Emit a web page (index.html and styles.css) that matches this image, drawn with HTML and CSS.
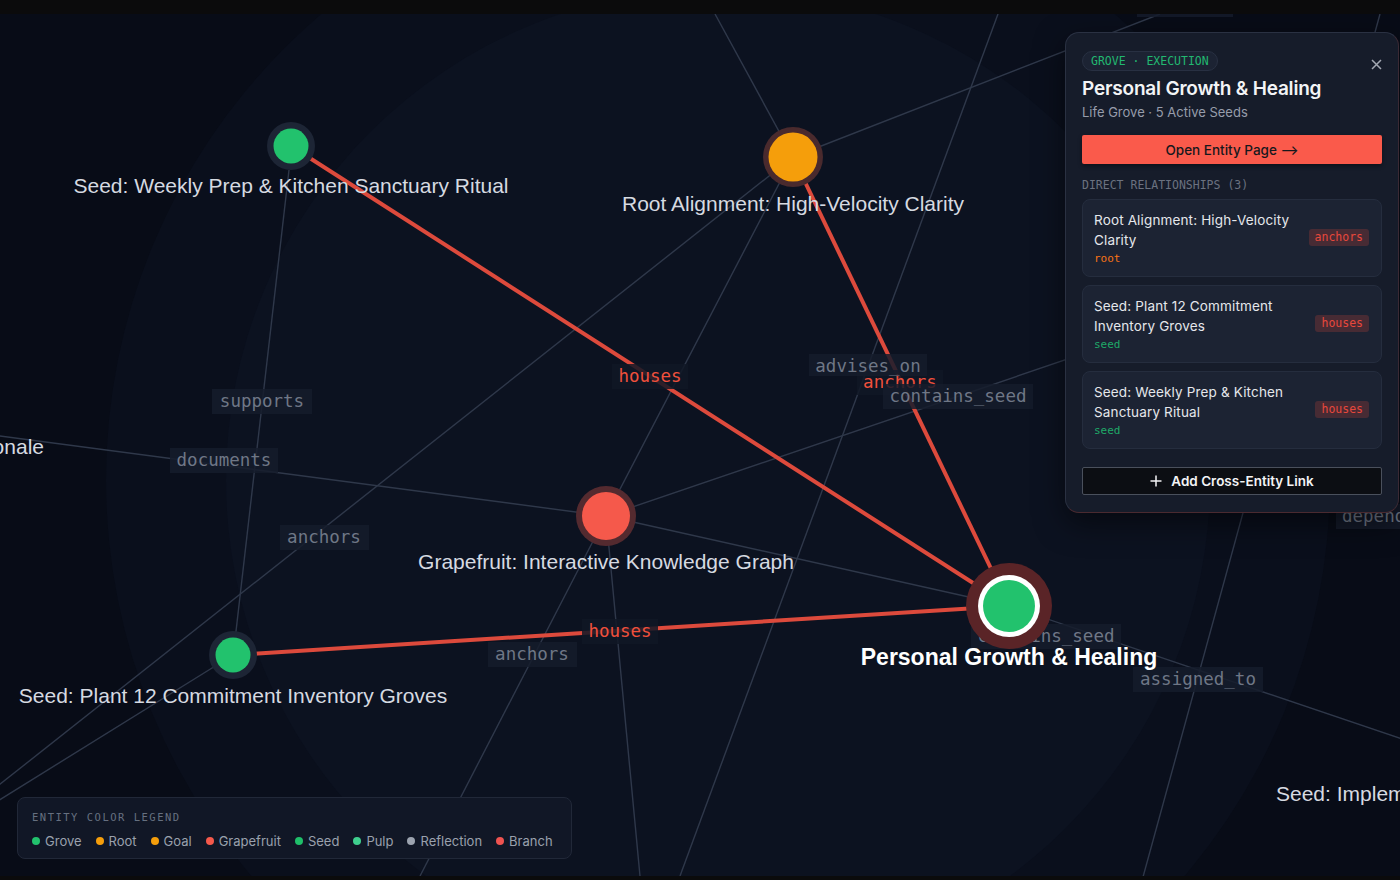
FILE: index.html
```html
<!DOCTYPE html>
<html>
	<head>
		<meta charset="UTF-8"/>
		<title>Grove Graph</title>
		<link rel="stylesheet" href="styles.css">
	</head>
	<body>
		<div class="topbar"></div>
		<main class="canvas">
			<svg class="graph" viewBox="0 14 1400 862" width="1400" height="862">
				<!-- backdrop -->
				<rect x="0" y="14" width="1400" height="862" fill="#080c17"/>
				<circle cx="718" cy="480" r="612" fill="#0a0f1c"/>
				<circle cx="718" cy="480" r="492" fill="#0c1220"/>

				<!-- faint edges -->
				<g class="edge">
					<line x1="289" y1="170" x2="235" y2="640"/>
					<line x1="-60" y1="428" x2="606" y2="516"/>
					<line x1="606" y1="516" x2="1009" y2="606"/>
					<line x1="793" y1="157" x2="-20" y2="800"/>
					<line x1="233" y1="655" x2="-20" y2="812"/>
					<line x1="793" y1="157" x2="606" y2="516"/>
					<line x1="793" y1="157" x2="715" y2="14"/>
					<line x1="793" y1="157" x2="1160" y2="14"/>
					<line x1="606" y1="516" x2="1300" y2="280"/>
					<line x1="998" y1="14" x2="680" y2="876"/>
					<line x1="606" y1="516" x2="640" y2="876"/>
					<line x1="606" y1="516" x2="420" y2="876"/>
					<line x1="1009" y1="606" x2="1420" y2="745"/>
					<line x1="1380" y1="14" x2="1143" y2="877"/>
				</g>

				<!-- highlighted edges -->
				<g class="edge-hot">
					<line x1="291" y1="146" x2="1009" y2="606"/>
					<line x1="793" y1="157" x2="1009" y2="606"/>
					<line x1="233" y1="655" x2="1009" y2="606"/>
				</g>

				<!-- edge labels -->
				<g class="elabel">
					<rect x="1137" y="0" width="96" height="17"/>
					<rect x="212" y="389" width="100" height="25"/>
					<text x="262" y="407">supports</text>
					<rect x="170" y="448" width="108" height="25"/>
					<text x="224" y="466">documents</text>
					<rect x="280" y="525" width="89" height="25"/>
					<text x="324" y="543">anchors</text>
					<rect x="488" y="642" width="89" height="25"/>
					<text x="532" y="660">anchors</text>
					<rect class="hot" x="857" y="370" width="86" height="25"/>
					<text class="hot" x="900" y="388">anchors</text>
					<rect x="809" y="354" width="118" height="22"/>
					<text x="868" y="372">advises_on</text>
					<rect x="883" y="384" width="150" height="25"/>
					<text x="958" y="402">contains_seed</text>
					<rect x="971" y="624" width="150" height="25"/>
					<text x="1046" y="642">contains_seed</text>
					<rect x="1133" y="667" width="130" height="25"/>
					<text x="1198" y="685">assigned_to</text>
					<rect x="1336" y="504" width="90" height="25"/>
					<text class="start" x="1342" y="522">dependency</text>
					<rect class="hot" x="612" y="364" width="76" height="25"/>
					<text class="hot" x="650" y="382">houses</text>
					<rect class="hot" x="582" y="619" width="76" height="25"/>
					<text class="hot" x="620" y="637">houses</text>
				</g>

				<!-- nodes -->
				<g class="node">
					<circle cx="291" cy="146" r="24" fill="#1d2535"/>
					<circle cx="291" cy="146" r="17.5" fill="#22c26d"/>
					<circle cx="793" cy="157" r="30" fill="#4a2a2d"/>
					<circle cx="793" cy="157" r="24.5" fill="#f59e0b"/>
					<circle cx="606" cy="516" r="30" fill="#542a2f"/>
					<circle cx="606" cy="516" r="24" fill="#f5594b"/>
					<circle cx="233" cy="655" r="24" fill="#1d2535"/>
					<circle cx="233" cy="655" r="17.5" fill="#22c26d"/>
					<circle cx="1009" cy="606" r="43" fill="#5a2427"/>
					<circle cx="1009" cy="606" r="31" fill="#ffffff"/>
					<circle cx="1009" cy="606" r="26" fill="#22c26d"/>
				</g>

				<!-- node labels -->
				<g class="nlabel">
					<text x="291" y="193">Seed: Weekly Prep &amp; Kitchen Sanctuary Ritual</text>
					<text x="793" y="211">Root Alignment: High-Velocity Clarity</text>
					<text x="606" y="569">Grapefruit: Interactive Knowledge Graph</text>
					<text x="233" y="703">Seed: Plant 12 Commitment Inventory Groves</text>
					<text class="end" x="44" y="454">Seed: Process Rationale</text>
					<text class="start" x="1276" y="801">Seed: Implement Weekly Review</text>
					<text class="main" x="1009" y="665">Personal Growth &amp; Healing</text>
				</g>
			</svg>

			<aside class="panel">
				<div class="panel-head">
					<span class="chip">GROVE · EXECUTION</span>
					<button class="close" aria-label="close">
						<svg width="11" height="11" viewBox="0 0 11 11"><path d="M1 1 L10 10 M10 1 L1 10"/></svg>
					</button>
				</div>
				<h2 class="panel-title">Personal Growth &amp; Healing</h2>
				<p class="panel-sub">Life Grove · 5 Active Seeds</p>
				<button class="btn-open">Open Entity Page ⟶</button>
				<div class="section-label">DIRECT RELATIONSHIPS (3)</div>
				<ul class="rels">
					<li class="rel">
						<div class="rel-text">
							<div class="rel-name">Root Alignment: High-Velocity Clarity</div>
							<div class="rel-type root">root</div>
						</div>
						<span class="rel-badge">anchors</span>
					</li>
					<li class="rel">
						<div class="rel-text">
							<div class="rel-name">Seed: Plant 12 Commitment Inventory Groves</div>
							<div class="rel-type seed">seed</div>
						</div>
						<span class="rel-badge">houses</span>
					</li>
					<li class="rel">
						<div class="rel-text">
							<div class="rel-name">Seed: Weekly Prep &amp; Kitchen Sanctuary Ritual</div>
							<div class="rel-type seed">seed</div>
						</div>
						<span class="rel-badge">houses</span>
					</li>
				</ul>
				<button class="btn-add">
					<svg width="12" height="12" viewBox="0 0 12 12"><path d="M6 0.5 V11.5 M0.5 6 H11.5"/></svg>
					Add Cross-Entity Link
				</button>
			</aside>

			<div class="legend">
				<div class="legend-title">ENTITY COLOR LEGEND</div>
				<div class="legend-items">
					<span class="li"><i style="background:#22c26d"></i>Grove</span>
					<span class="li"><i style="background:#f59e0b"></i>Root</span>
					<span class="li"><i style="background:#f59e0b"></i>Goal</span>
					<span class="li"><i style="background:#f5594b"></i>Grapefruit</span>
					<span class="li"><i style="background:#1fbf6a"></i>Seed</span>
					<span class="li"><i style="background:#3fcf8e"></i>Pulp</span>
					<span class="li"><i style="background:#9ca3af"></i>Reflection</span>
					<span class="li"><i style="background:#ef5350"></i>Branch</span>
				</div>
			</div>
		</main>
		<div class="bottombar"></div>
	</body>
</html>
```
FILE: styles.css
```css
html, body{
	margin: 0;
	padding: 0;
	background: #0b0b0c;
	width: 1400px;
	height: 880px;
	overflow: hidden;
	font-family: "Inter", "Noto Sans", sans-serif;
}
.topbar{
	height: 14px;
	background: #0b0b0c;
}
.bottombar{
	height: 4px;
	background: #0b0b0c;
}
.canvas{
	position: relative;
	width: 1400px;
	height: 862px;
	overflow: hidden;
}
.graph{
	display: block;
}

/* graph */
.edge line{
	stroke: #2f384a;
	stroke-width: 1.4;
}
.edge-hot line{
	stroke: #dd4a3c;
	stroke-width: 4;
}
.elabel rect{
	fill: #151c2b;
	opacity: 0.85;
}
.elabel rect.hot{
	fill: #111726;
}
.elabel text{
	font-family: "DejaVu Sans Mono", "Liberation Mono", monospace;
	font-size: 17.5px;
	fill: #6f7786;
	text-anchor: middle;
}
.elabel text.hot{
	fill: #f0503c;
}
.nlabel text{
	font-family: "Liberation Sans", Arial, sans-serif;
	font-size: 21px;
	fill: #d6dae1;
	text-anchor: middle;
}
.nlabel text.main{
	font-weight: bold;
	font-size: 23px;
	fill: #ffffff;
}
.graph text.start{
	text-anchor: start;
}
.graph text.end{
	text-anchor: end;
}

/* side panel */
.panel{
	position: absolute;
	left: 1065px;
	top: 18px;
	width: 334px;
	box-sizing: border-box;
	padding: 18px 16px 17px;
	background: #161c2a;
	border: 1px solid #2a3142;
	border-bottom-color: #4a2a30;
	border-right-color: #3a2a34;
	border-radius: 14px;
	box-shadow: 0 10px 30px rgba(0,0,0,0.5);
	color: #e8eaee;
}
.panel-head{
	display: flex;
	align-items: flex-start;
	justify-content: space-between;
	height: 20px;
}
.chip{
	display: inline-block;
	height: 20px;
	line-height: 18px;
	padding: 0 8px;
	border-radius: 10px;
	background: #1c2333;
	border: 1px solid #283042;
	box-sizing: border-box;
	font-family: "DejaVu Sans Mono", "Liberation Mono", monospace;
	font-size: 11.5px;
	color: #22b871;
}
.close{
	background: none;
	border: 0;
	padding: 0;
	margin: 6px -1px 0 0;
	width: 14px;
	height: 14px;
	display: flex;
	align-items: center;
	justify-content: center;
}
.close path{
	stroke: #a3a8b2;
	stroke-width: 1.5;
	fill: none;
}
.panel-title{
	margin: 5px 0 0;
	font-size: 19px;
	line-height: 26px;
	font-weight: 600;
	color: #f3f4f6;
	letter-spacing: -0.2px;
}
.panel-sub{
	margin: 1px 0 0;
	font-size: 13px;
	line-height: 18px;
	color: #969cab;
}
.btn-open{
	display: block;
	width: 100%;
	margin-top: 14px;
	height: 29px;
	border: 0;
	border-radius: 2px;
	background: #fa5a4b;
	color: #16181d;
	font-family: "Inter", "DejaVu Sans", sans-serif;
	font-size: 13.5px;
	font-weight: 500;
	box-shadow: 0 2px 4px rgba(0,0,0,0.4);
}
.section-label{
	margin-top: 14px;
	font-family: "DejaVu Sans Mono", "Liberation Mono", monospace;
	font-size: 11.5px;
	line-height: 14px;
	color: #6b7280;
}
.rels{
	list-style: none;
	margin: 7px 0 0;
	padding: 0;
	display: flex;
	flex-direction: column;
	gap: 8px;
}
.rel{
	display: flex;
	align-items: center;
	gap: 10px;
	height: 78px;
	box-sizing: border-box;
	padding: 9px 12px 10px 11px;
	background: #1c2333;
	border: 1px solid #252d3e;
	border-radius: 8px;
}
.rel-text{
	flex: 1;
	min-width: 0;
}
.rel-name{
	font-size: 13.5px;
	letter-spacing: 0.15px;
	line-height: 20px;
	color: #e5e7eb;
	max-width: 208px;
}
.rel-type{
	margin-top: 1px;
	font-family: "DejaVu Sans Mono", "Liberation Mono", monospace;
	font-size: 11px;
	line-height: 15px;
}
.rel-type.root{
	color: #f97316;
}
.rel-type.seed{
	color: #1fa968;
}
.rel-badge{
	flex: none;
	padding: 0 6px;
	border-radius: 3px;
	background: rgba(226,72,60,0.22);
	font-family: "DejaVu Sans Mono", "Liberation Mono", monospace;
	font-size: 11.5px;
	line-height: 17px;
	color: #e8483c;
}
.btn-add{
	display: flex;
	align-items: center;
	justify-content: center;
	gap: 9px;
	width: 100%;
	height: 28px;
	margin-top: 18px;
	background: #0c0e13;
	border: 1.5px solid #4a505c;
	border-radius: 2px;
	color: #f3f4f6;
	font-family: "Inter", sans-serif;
	font-size: 13.5px;
	font-weight: 600;
}
.btn-add path{
	stroke: #f3f4f6;
	stroke-width: 1.5;
	fill: none;
}

/* legend */
.legend{
	position: absolute;
	left: 17px;
	top: 783px;
	width: 555px;
	height: 62px;
	box-sizing: border-box;
	padding: 12px 14px 0 14px;
	background: #111726;
	border: 1px solid #212838;
	border-radius: 8px;
}
.legend-title{
	font-family: "DejaVu Sans Mono", "Liberation Mono", monospace;
	font-size: 10.5px;
	line-height: 14px;
	letter-spacing: 1.5px;
	color: #667080;
}
.legend-items{
	display: flex;
	gap: 14px;
	margin-top: 8px;
}
.li{
	display: flex;
	align-items: center;
	gap: 5px;
	font-size: 13px;
	line-height: 18px;
	color: #9aa1ad;
}
.li i{
	display: block;
	width: 8px;
	height: 8px;
	border-radius: 50%;
}
```
